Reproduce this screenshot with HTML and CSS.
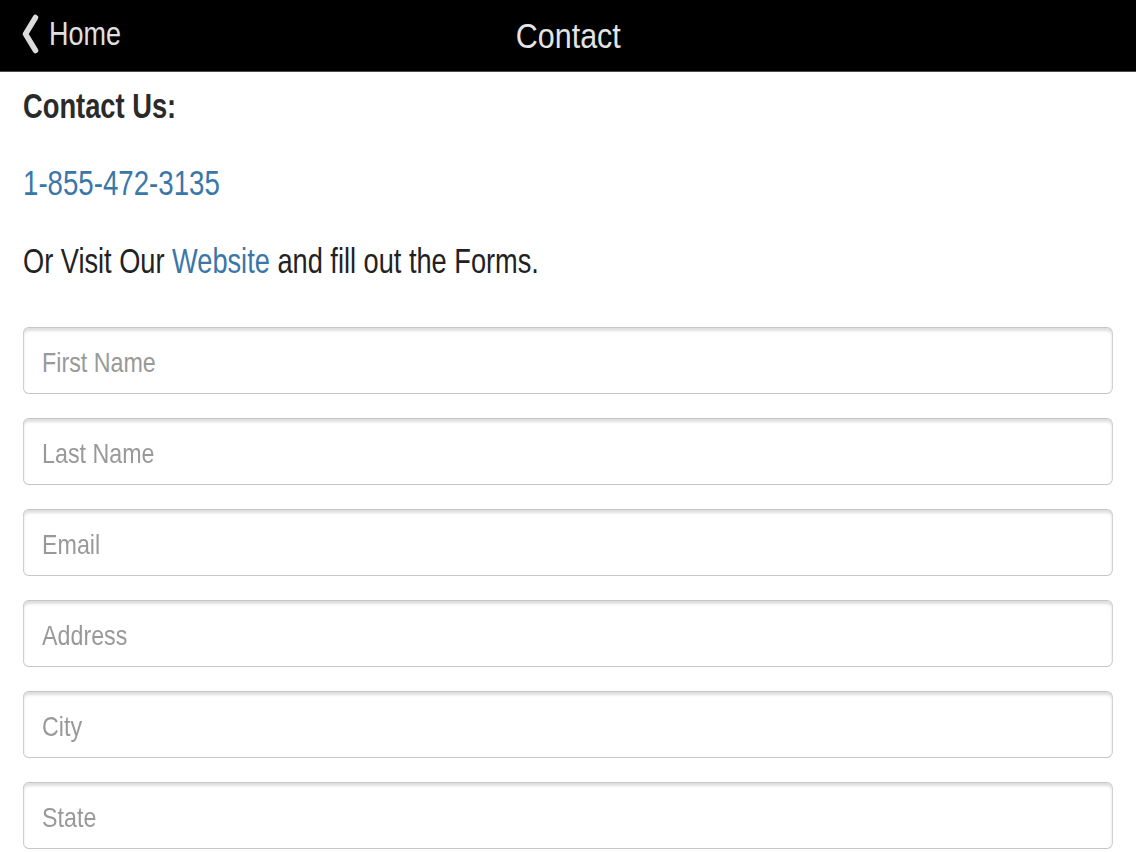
FILE: index.html
```html
<!DOCTYPE html>
<html lang="en">
<head>
<meta charset="utf-8">
<title>Contact</title>
<link rel="stylesheet" href="styles.css">
</head>
<body>
<header class="navbar">
  <a class="back" href="#">
    <svg class="chev" width="18" height="40" viewBox="0 0 18 40" aria-hidden="true">
      <path d="M14.5 3.5 L4.5 20 L14.5 36.5" fill="none" stroke="#dcdcdc" stroke-width="5.5" stroke-linecap="round" stroke-linejoin="round"/>
    </svg>
    <span class="back-label">Home</span>
  </a>
  <h1 class="title">Contact</h1>
</header>
<main class="content">
  <h2 class="heading">Contact Us:</h2>
  <p class="line phone"><a class="link" href="#">1-855-472-3135</a></p>
  <p class="line visit">Or Visit Our <a class="link" href="#">Website</a> and fill out the Forms.</p>
  <form class="form">
    <input class="field" type="text" placeholder="First Name">
    <input class="field" type="text" placeholder="Last Name">
    <input class="field" type="email" placeholder="Email">
    <input class="field" type="text" placeholder="Address">
    <input class="field" type="text" placeholder="City">
    <input class="field" type="text" placeholder="State">
  </form>
</main>
</body>
</html>
```
FILE: styles.css
```css
html, body {
  margin: 0;
  padding: 0;
  overflow: hidden;
  background: #ffffff;
}
body {
  font-family: "Liberation Sans", Arial, Helvetica, sans-serif;
  color: #222222;
}
.navbar {
  position: relative;
  height: 72px;
  background: #000000;
  border-bottom: 1px solid #4a4a4a;
  box-sizing: border-box;
  display: flex;
  align-items: center;
  justify-content: center;
}
.back {
  position: absolute;
  left: 21px;
  top: 14px;
  display: flex;
  align-items: center;
  gap: 10px;
  color: #e0e0e0;
  text-decoration: none;
}
.chev {
  display: block;
}
.back-label {
  display: inline-block;
  font-size: 33.5px;
  line-height: 40px;
  transform: scaleX(0.806);
  transform-origin: left center;
}
.title {
  margin: 0;
  font-weight: normal;
  font-size: 35px;
  line-height: 40px;
  color: #e4e4e4;
  transform: scaleX(0.87);
  transform-origin: center center;
}
.content {
  padding: 14px 23px 0 23px;
}
.heading {
  margin: 0;
  font-size: 35px;
  font-weight: bold;
  line-height: 40px;
  color: #2a2a2a;
  white-space: nowrap;
  transform: scaleX(0.78);
  transform-origin: left center;
}
.line {
  margin: 37px 0 0 0;
  font-size: 35px;
  line-height: 40px;
  white-space: nowrap;
  transform-origin: left center;
}
.phone {
  transform: scaleX(0.79);
}
.visit {
  margin-top: 38px;
  transform: scaleX(0.777);
}
.link {
  color: #3a77a9;
  text-decoration: none;
}
.form {
  display: flex;
  flex-direction: column;
  gap: 24px;
  margin-top: 46px;
  width: 1313px;
  transform: scaleX(0.83);
  transform-origin: left top;
}
.field {
  display: block;
  box-sizing: border-box;
  width: 100%;
  height: 67px;
  margin: 0;
  padding: 4px 22px 0 22px;
  border: 1px solid #c6c6c6;
  border-radius: 7px / 6px;
  box-shadow: inset 0 3px 3px rgba(0, 0, 0, 0.13);
  background: #ffffff;
  font-family: "Liberation Sans", Arial, Helvetica, sans-serif;
  font-size: 28px;
  color: #333333;
  outline: none;
}
.field::placeholder {
  color: #999999;
}
```
